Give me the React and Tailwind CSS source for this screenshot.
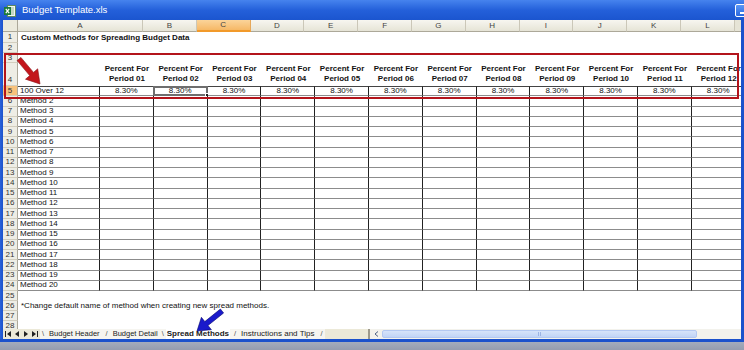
import React from 'react';

const headerCols = ['B', 'C', 'D', 'E', 'F', 'G', 'H', 'I', 'J', 'K', 'L'];
const periods = Array.from({ length: 12 }, (_, i) => String(i + 1).padStart(2, '0'));
const methods = ['100 Over 12', ...Array.from({ length: 19 }, (_, i) => `Method ${i + 2}`)];

const ROW = 'grid grid-cols-[15px_82px_repeat(12,53.8px)]';

function RowNum({ n, active, bottom }) {
  return (
    <div
      className={`flex justify-center border-r border-b border-r-[#ACA899] border-b-[#D2CEBF] text-[8px] leading-none text-[#333] ${
        bottom ? 'items-end pb-[1px]' : 'items-center'
      } ${active ? 'bg-[#F8C27C]' : 'bg-[#EEEDE5]'}`}
    >
      {n}
    </div>
  );
}

function PlainRow({ n, h, children, bold }) {
  return (
    <div className={`${ROW} ${h}`}>
      <RowNum n={n} />
      <div
        className={`col-span-13 flex items-center whitespace-nowrap pl-[3px] text-[8px] leading-none text-[#111] ${
          bold ? 'font-bold' : ''
        }`}
      >
        {children}
      </div>
    </div>
  );
}

function TitleBar() {
  return (
    <div className="flex h-[20px] items-center overflow-hidden bg-gradient-to-b from-[#4683EE] via-[#2460DA] to-[#1B55CF]">
      <svg width="14" height="14" viewBox="0 0 14 14" className="ml-[3px] mt-[1px]">
        <rect x="4.5" y="1.5" width="8" height="11" fill="#F4F7F0" stroke="#5E8A62" />
        <path d="M7 4h4M7 6h4M7 8h4M7 10h4" stroke="#7FA882" strokeWidth="0.8" />
        <rect x="1" y="3" width="7" height="8" fill="#1E7B3C" />
        <path d="M2.8 4.8l3.4 4.4M6.2 4.8l-3.4 4.4" stroke="#fff" strokeWidth="1.2" />
      </svg>
      <span className="ml-[5px] text-[9.5px] leading-none text-white">Budget Template.xls</span>
      <div className="ml-auto mr-[-6px] mt-[1px] flex h-[13px] w-[15px] items-end justify-center rounded-[2px] border border-white bg-gradient-to-b from-[#5B97F6] to-[#2B67DE] pb-[2px]">
        <div className="h-[2px] w-[5px] bg-white" />
      </div>
    </div>
  );
}

function ColumnHeader() {
  return (
    <div className="grid h-[12px] grid-cols-[15px_125px_repeat(11,53.8px)_1fr]">
      <div className="border-r border-b border-[#ACA899] bg-[#ECEADD]" />
      <div className="flex items-center justify-center border-r border-b border-r-[#CBC7B8] border-b-[#ACA899] bg-gradient-to-b from-[#F7F6F0] to-[#E6E4D6] text-[8px] leading-none text-[#444]">
        A
      </div>
      {headerCols.map((c) =>
        c === 'C' ? (
          <div
            key={c}
            className="flex items-center justify-center border-r border-b-2 border-r-[#E6A85A] border-b-[#F29A2A] bg-gradient-to-b from-[#FBD49A] to-[#F6B865] text-[8px] leading-none text-[#444]"
          >
            {c}
          </div>
        ) : (
          <div
            key={c}
            className="flex items-center justify-center border-r border-b border-r-[#CBC7B8] border-b-[#ACA899] bg-gradient-to-b from-[#F7F6F0] to-[#E6E4D6] text-[8px] leading-none text-[#444]"
          >
            {c}
          </div>
        )
      )}
      <div className="border-b border-[#ACA899] bg-[#E6E4D6]" />
    </div>
  );
}

function TableRow({ n, label, first }) {
  const edge = first ? 'border-t border-t-[#444]' : '';
  return (
    <div className={`${ROW} h-[10.25px]`}>
      <RowNum n={n} active={first} />
      <div
        className={`flex items-center whitespace-nowrap border-r border-b border-r-[#222] border-b-[#8C8C8C] pl-[2px] text-[8px] leading-none text-[#111] ${edge}`}
      >
        {label}
      </div>
      {periods.map((p) => (
        <div
          key={p}
          className={`relative flex items-center justify-center border-r border-b border-r-[#222] border-b-[#8C8C8C] text-[8px] leading-none text-[#111] ${edge}`}
        >
          {first ? '8.30%' : ''}
          {first && p === '02' && (
            <div className="absolute -top-[1px] -left-[1px] -right-[1px] -bottom-[1px] border-2 border-[#6E6E6E]">
              <div className="absolute -right-[3px] -bottom-[3px] h-[4px] w-[4px] border border-white bg-[#222]" />
            </div>
          )}
        </div>
      ))}
    </div>
  );
}

function Sheet() {
  return (
    <div className="flex-1 overflow-hidden bg-white">
      <PlainRow n={1} h="h-[11px]" bold>
        Custom Methods for Spreading Budget Data
      </PlainRow>
      <PlainRow n={2} h="h-[10px]" />
      <PlainRow n={3} h="h-[10px]" />
      <div className={`${ROW} h-[23px]`}>
        <RowNum n={4} bottom />
        <div />
        {periods.map((p) => (
          <div
            key={p}
            className="flex flex-col items-center justify-end pb-[2px] text-[8px] font-bold leading-[10px] text-[#111] whitespace-nowrap"
          >
            <span>Percent For</span>
            <span>Period {p}</span>
          </div>
        ))}
      </div>
      {methods.map((m, i) => (
        <TableRow key={m} n={i + 5} label={m} first={i === 0} />
      ))}
      <PlainRow n={25} h="h-[10px]" />
      <PlainRow n={26} h="h-[10px]">
        *Change default name of method when creating new spread methods.
      </PlainRow>
      <PlainRow n={27} h="h-[10px]" />
      <PlainRow n={28} h="h-[10px]" />
    </div>
  );
}

function NavArrow({ dir, bar }) {
  return (
    <svg width="6" height="6" viewBox="0 0 6 6">
      {dir === 'left' ? (
        <path d={bar ? 'M0 0h1v6H0zM6 0v6L2 3z' : 'M5 0v6L1 3z'} fill="#222" />
      ) : (
        <path d={bar ? 'M5 0h1v6H5zM0 0v6l4-3z' : 'M1 0v6l4-3z'} fill="#222" />
      )}
    </svg>
  );
}

function TabBar() {
  return (
    <div className="flex h-[10px] items-stretch text-[7.5px] leading-none text-[#222]">
      <div className="flex w-[37px] items-center justify-around bg-[#ECE9D8] px-[1px]">
        <NavArrow dir="left" bar />
        <NavArrow dir="left" />
        <NavArrow dir="right" />
        <NavArrow dir="right" bar />
      </div>
      <div className="flex items-center whitespace-nowrap bg-[#F6F5F0] pr-[2px]">
        <span className="ml-[2px] text-[#555]">\</span>
        <span className="ml-[5px]">Budget Header</span>
        <span className="ml-[6px] text-[#555]">/</span>
        <span className="ml-[5px]">Budget Detail</span>
        <span className="ml-[4px] text-[#555]">\</span>
        <span className="ml-[2px] flex h-full items-center bg-white px-[1px] text-[8px] font-bold">Spread Methods</span>
        <span className="ml-[4px] text-[#555]">/</span>
        <span className="ml-[5px] text-[8px]">Instructions and Tips</span>
        <span className="ml-[6px] text-[#555]">/</span>
      </div>
      <div className="flex-1 border-r-2 border-[#9E9A8C] bg-[#ECE9D8]" />
      <div className="flex w-[371px] items-stretch bg-[#F3F2EC]">
        <div className="flex w-[12px] items-center justify-center">
          <svg width="5" height="6" viewBox="0 0 5 6">
            <path d="M4 0.5L1 3l3 2.5" stroke="#4D6185" strokeWidth="1" fill="none" />
          </svg>
        </div>
        <div className="my-[1px] flex w-[315px] items-center justify-center rounded-[2px] border border-[#B3C8F1] bg-gradient-to-b from-[#D6E3FA] to-[#C1D4F6]">
          <div className="h-[4px] w-[3px] border-x border-[#9DB4E4]" />
        </div>
      </div>
    </div>
  );
}

export default function App() {
  return (
    <div className="relative flex h-[350px] w-[744px] flex-col overflow-hidden bg-[#1F57D3] font-['Liberation_Sans',Arial,sans-serif]">
      <TitleBar />
      <div className="flex flex-1 overflow-hidden">
        <div className="w-[3px] bg-gradient-to-r from-[#2A62DA] to-[#1B52CC]" />
        <div className="flex flex-1 flex-col overflow-hidden bg-white">
          <ColumnHeader />
          <Sheet />
          <TabBar />
        </div>
        <div className="w-[3px] bg-[#1B52CC]" />
      </div>
      <div className="h-[3px] bg-[#1C52CB]" />
      <div className="h-[8px] bg-gradient-to-b from-[#A4ACBC] to-[#959DAF]" />

      <div className="pointer-events-none absolute left-[4px] top-[53px] h-[46px] w-[735px] border-2 border-[#B3141B]" />
      <svg className="pointer-events-none absolute left-0 top-0" width="744" height="350" viewBox="0 0 744 350">
        <polygon
          points="20.9,57.4 33.5,72.4 37.7,68.8 40,84 25.5,79.2 29.7,75.6 17.1,60.6"
          fill="#C3161C"
          stroke="#8A0E12"
          strokeWidth="0.6"
        />
        <polygon
          points="220.4,309 204.8,321.6 201.4,317.3 197,331 211.4,329.7 208,325.5 223.6,313"
          fill="#1A1ACB"
          stroke="#06066E"
          strokeWidth="0.6"
        />
      </svg>
    </div>
  );
}
